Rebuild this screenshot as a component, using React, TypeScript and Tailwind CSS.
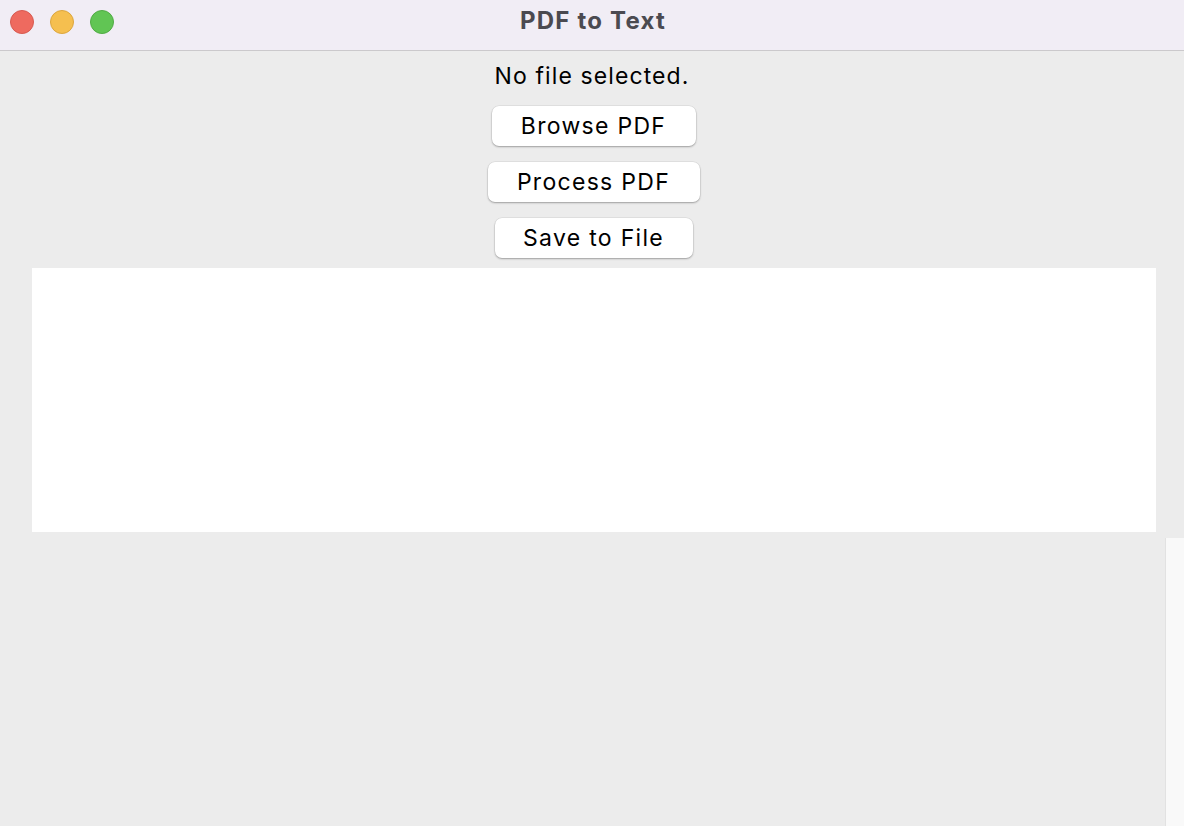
export default function App() {
  const buttons = [
    { label: "Browse PDF", w: "w-[204px]" },
    { label: "Process PDF", w: "w-[212px]" },
    { label: "Save to File", w: "w-[198px]" },
  ];
  return (
    <div className="w-[1184px] h-[826px] bg-[#ececec] flex flex-col overflow-hidden font-['Inter','Liberation_Sans',sans-serif]">
      <div className="h-[51px] shrink-0 bg-[#f1edf5] border-b border-[#cbc9cc] flex items-center relative">
        <div className="absolute left-[10px] top-[10px] flex gap-[16px]">
          <div className="w-[24px] h-[24px] rounded-full bg-[#ee6a5f] border border-[#d75a50]" />
          <div className="w-[24px] h-[24px] rounded-full bg-[#f5bf4f] border border-[#dca63e]" />
          <div className="w-[24px] h-[24px] rounded-full bg-[#61c554] border border-[#51ab45]" />
        </div>
        <div className="flex-1 text-center text-[24px] font-bold tracking-[1.2px] text-[#4b4a50] pb-[8px] pl-[2px]">PDF to Text</div>
      </div>
      <div className="flex flex-col items-center pt-[11px]">
        <div className="text-[23px] leading-[28px] tracking-[1.1px] text-black">No file selected.</div>
        <div className="flex flex-col items-center gap-[16px] mt-[16px] pl-[3px]">
          {buttons.map((b) => (
            <button
              key={b.label}
              className={`${b.w} h-[40px] bg-white rounded-[7px] text-[23px] tracking-[1.3px] text-black shadow-[0_1px_2px_rgba(0,0,0,0.3),0_0_0_0.5px_rgba(0,0,0,0.08)]`}
            >
              {b.label}
            </button>
          ))}
        </div>
      </div>
      <div className="ml-[32px] mr-[28px] mt-[10px] h-[264px] bg-white shrink-0" />
      <div className="flex-1 flex mt-[6px]">
        <div className="flex-1" />
        <div className="w-[19px] bg-[#f9f9f9] border-l border-[#e2e2e2]" />
      </div>
    </div>
  );
}
